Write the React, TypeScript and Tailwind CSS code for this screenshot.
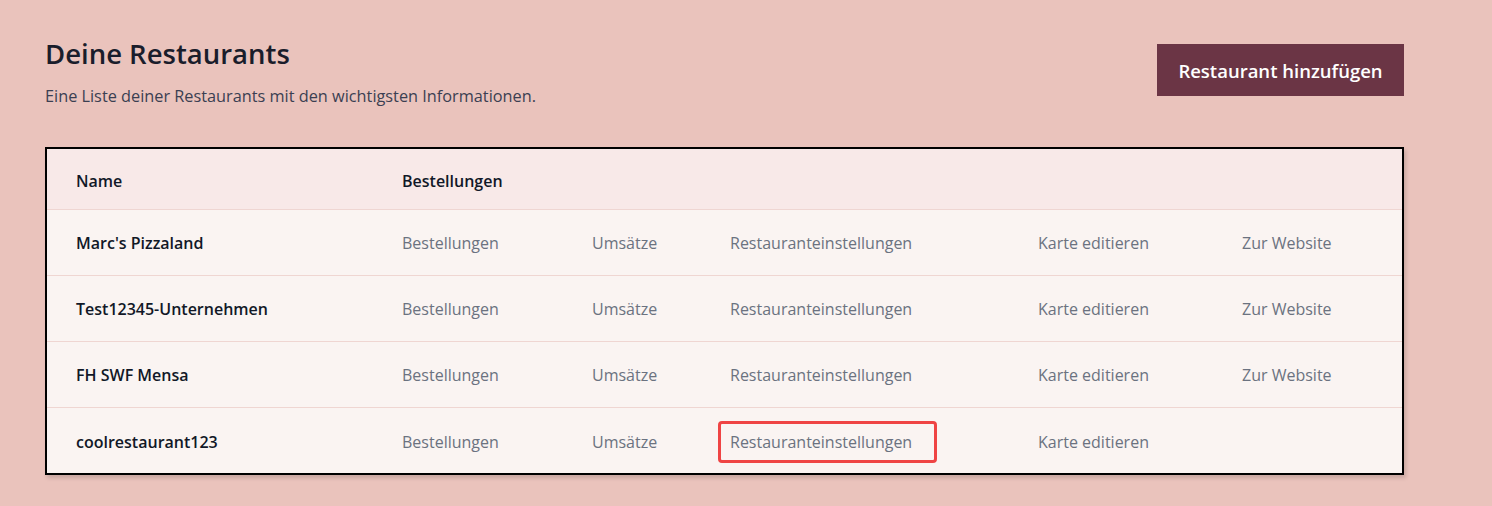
const rows = [
  { name: "Marc's Pizzaland", website: true, highlight: false },
  { name: "Test12345-Unternehmen", website: true, highlight: false },
  { name: "FH SWF Mensa", website: true, highlight: false },
  { name: "coolrestaurant123", website: false, highlight: true },
];

export default function App() {
  return (
    <div className="min-h-[506px] bg-[#eac3bc] pl-[45px] pr-[88px] pt-[35px] font-['Open_Sans',sans-serif]">
      <div className="flex items-start justify-between">
        <div>
          <h1 className="pt-[1px] text-[27.5px] font-semibold leading-[36px] text-[#1a1d2b]">Deine Restaurants</h1>
          <p className="mt-[12px] text-[16.3px] text-[#3b3f52]">Eine Liste deiner Restaurants mit den wichtigsten Informationen.</p>
        </div>
        <button className="mt-[9px] h-[52px] w-[247px] bg-[#6b3545] pt-[1px] text-[18.5px] font-semibold text-white">
          Restaurant hinzufügen
        </button>
      </div>

      <div className="mt-[39px] border-2 border-black shadow-[2px_3px_4px_rgba(0,0,0,0.15)]">
        <table className="w-full table-fixed border-collapse text-[16px]">
          <colgroup>
            <col className="w-[325px]" />
            <col className="w-[190px]" />
            <col className="w-[138px]" />
            <col className="w-[308px]" />
            <col className="w-[204px]" />
            <col />
          </colgroup>
          <thead>
            <tr className="h-[60px] bg-[#f8e9e8] text-left">
              <th className="pl-[29px] pt-[3px] font-semibold text-[#111827]">Name</th>
              <th className="pl-[30px] pt-[3px] font-semibold text-[#111827]">Bestellungen</th>
              <th />
              <th />
              <th />
              <th />
            </tr>
          </thead>
          <tbody className="bg-[#faf4f2]">
            {rows.map((r) => (
              <tr key={r.name} className="h-[66px] border-t border-[#efd6d2]">
                <td className="pl-[29px] pt-[2px] font-semibold text-[#111827]">{r.name}</td>
                <td className="pl-[30px] pt-[2px] text-[#6b7280]">Bestellungen</td>
                <td className="pl-[30px] pt-[2px] text-[#6b7280]">Umsätze</td>
                <td className="pl-[30px] pt-[2px] text-[#6b7280]">
                  {r.highlight ? (
                    <span className="-ml-[12px] inline-block w-[219px] rounded-[4px] border-[3px] border-[#ef4444] px-[9px] py-[6px]">
                      Restauranteinstellungen
                    </span>
                  ) : (
                    "Restauranteinstellungen"
                  )}
                </td>
                <td className="pl-[30px] pt-[2px] text-[#6b7280]">Karte editieren</td>
                <td className="pl-[30px] pt-[2px] text-[#6b7280]">{r.website ? "Zur Website" : ""}</td>
              </tr>
            ))}
          </tbody>
        </table>
      </div>
    </div>
  );
}
